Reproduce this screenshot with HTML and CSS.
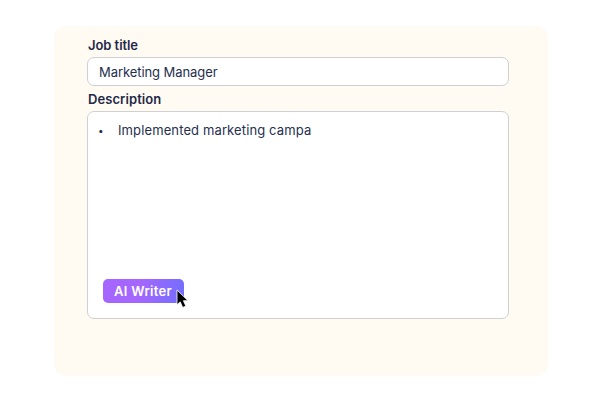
FILE: index.html
```html
<!DOCTYPE html>
<html lang="en">
<head>
<meta charset="utf-8">
<title>Job description</title>
<link rel="stylesheet" href="styles.css">
</head>
<body>
<main class="card">
  <label class="label">Job title</label>
  <div class="input"><span class="value">Marketing Manager</span></div>
  <label class="label label-desc">Description</label>
  <div class="editor">
    <ul class="list"><li><span class="entry">Implemented marketing campa</span></li></ul>
    <button class="writer"><span class="writer-text">AI Writer</span>
      <svg class="cursor" width="14" height="22" viewBox="0 0 14 22"><path d="M1 1V15.8L4.2 12.8L6.7 18.4L9.8 17.1L7.4 11.7H12Z" fill="#000" stroke="#fff" stroke-width=".8"/></svg>
    </button>
  </div>
</main>
</body>
</html>
```

FILE: styles.css
```css
* { box-sizing: border-box; }
body { margin: 0; background: #fff; font-family: Inter, sans-serif; color: #25304f; }
.card { width: 494px; height: 350px; margin: 26px 0 0 54px; padding: 10px 39px 0 33px; background: #fffaf2; border-radius: 12px; }
.label { display: block; height: 21px; padding-left: 1px; line-height: 19px; font-size: 13px; font-weight: 600; letter-spacing: -.06px; color: #1e2948; }
.input { height: 29px; border: 1px solid #cfd0d4; border-radius: 7px; background: #fff; padding: 0 11px; line-height: 28px; font-size: 13px; letter-spacing: -.07px; }
.label-desc { margin-top: 4px; letter-spacing: .08px; }
.editor { display: flex; flex-direction: column; justify-content: space-between; align-items: flex-start; height: 208px; border: 1px solid #cfd0d4; border-radius: 7px; background: #fff; padding: 8px 15px 15px 10px; }
.list { margin: 0; padding: 0; list-style: none; font-size: 13px; line-height: 20px; letter-spacing: .12px; }
.list li { display: flex; }
.list li::before { content: "•"; width: 20px; font-size: 10px; }
.writer { position: relative; width: 81px; height: 24px; margin-left: 5px; padding: 0; border: 0; border-radius: 5px; background: linear-gradient(100deg, #a566ff 45%, #716eff); color: #fff; font: 600 13px/24px Inter, sans-serif; letter-spacing: .3px; }
.writer-text { margin-right: 1px; }
.cursor { position: absolute; left: 73px; top: 10px; }
```
